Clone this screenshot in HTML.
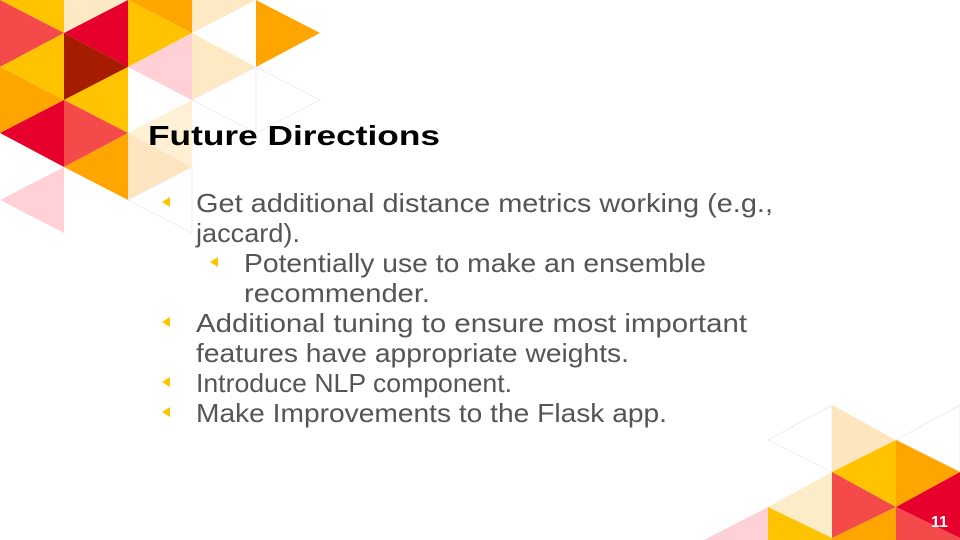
<!DOCTYPE html>
<html><head><meta charset="utf-8"><style>html,body{margin:0;padding:0;background:#fff;width:960px;height:540px;overflow:hidden}svg{display:block}</style></head>
<body>
<svg width="960" height="540" viewBox="0 0 960 540" xmlns="http://www.w3.org/2000/svg" font-family="Liberation Sans, sans-serif" overflow="hidden">
<g stroke-width="0">
<polygon points="64,-33 64,33 0,0" fill="#ffc300"/>
<polygon points="0,0 0,67 64,33" fill="#f44a4a"/>
<polygon points="64,33 64,100 0,67" fill="#ffc300"/>
<polygon points="0,67 0,133 64,100" fill="#ffa500"/>
<polygon points="64,100 64,167 0,133" fill="#e8002d"/>
<polygon points="64,167 64,233 0,200" fill="#ffd0d5"/>
<polygon points="64,-33 64,33 128,0" fill="#fde9c4"/>
<polygon points="128,0 128,67 64,33" fill="#e8002d"/>
<polygon points="64,33 64,100 128,67" fill="#a61c00"/>
<polygon points="128,67 128,133 64,100" fill="#ffc300"/>
<polygon points="64,100 64,167 128,133" fill="#f44a4a"/>
<polygon points="128,133 128,200 64,167" fill="#ffa500"/>
<polygon points="192,-33 192,33 128,0" fill="#ffa500"/>
<polygon points="128,0 128,67 192,33" fill="#ffc300"/>
<polygon points="192,33 192,100 128,67" fill="#ffd0d5"/>
<polygon points="192,100 192,167 128,133" fill="#fdf0d5"/>
<polygon points="128,133 128,200 192,167" fill="#fde5c0"/>
<polygon points="192,167 192,233 128,200" fill="#fff" stroke="#eee" stroke-width="1"/>
<polygon points="192,-33 192,33 256,0" fill="#fde9c4"/>
<polygon points="192,33 192,100 256,67" fill="#fde9c4"/>
<polygon points="256,67 256,133 192,100" fill="#fff" stroke="#eee" stroke-width="1"/>
<polygon points="256,0 256,67 320,33" fill="#ffa500"/>
<polygon points="256,67 256,133 320,100" fill="none" stroke="#eee" stroke-width="1"/>
<polygon points="832,405 832,472 768,440" fill="#fff" stroke="#eee" stroke-width="1"/>
<polygon points="832,472 832,538 768,507" fill="#fdecc8"/>
<polygon points="768,507 768,540 832,540 832,538" fill="#ffc300"/>
<polygon points="768,507 768,540 704,540" fill="#ffd0d5"/>
<polygon points="832,405 832,472 896,440" fill="#fde5c0"/>
<polygon points="896,440 896,507 832,472" fill="#ffc300"/>
<polygon points="832,472 832,538 896,507" fill="#f44a4a"/>
<polygon points="896,507 896,540 832,540 832,538" fill="#ffa500"/>
<polygon points="960,405 960,472 896,440" fill="#fff" stroke="#eee" stroke-width="1"/>
<polygon points="896,440 896,507 960,472" fill="#ffa500"/>
<polygon points="960,472 960,538 896,507" fill="#e8002d"/>
<polygon points="896,507 896,540 960,540 960,538" fill="#f44a4a"/>
</g>
<text x="148" y="145" font-size="28" font-weight="bold" fill="#000" textLength="292" lengthAdjust="spacingAndGlyphs">Future Directions</text>
<g fill="#ffc300">
<polygon points="170,197 170,207 162,202"/>
<polygon points="218,257 218,267 210,262"/>
<polygon points="170,317 170,327 162,322"/>
<polygon points="170,377 170,387 162,382"/>
<polygon points="170,407 170,417 162,412"/>
</g>
<g font-size="26" fill="#555">
<text x="196" y="212" textLength="577" lengthAdjust="spacingAndGlyphs">Get additional distance metrics working (e.g.,</text>
<text x="196" y="242" textLength="104" lengthAdjust="spacingAndGlyphs">jaccard).</text>
<text x="244" y="272" textLength="462" lengthAdjust="spacingAndGlyphs">Potentially use to make an ensemble</text>
<text x="244" y="302" textLength="186" lengthAdjust="spacingAndGlyphs">recommender.</text>
<text x="196" y="332" textLength="551" lengthAdjust="spacingAndGlyphs">Additional tuning to ensure most important</text>
<text x="196" y="362" textLength="433" lengthAdjust="spacingAndGlyphs">features have appropriate weights.</text>
<text x="196" y="392" textLength="316" lengthAdjust="spacingAndGlyphs">Introduce NLP component.</text>
<text x="196" y="422" textLength="471" lengthAdjust="spacingAndGlyphs">Make Improvements to the Flask app.</text>
</g>
<text x="931" y="527" font-size="16" font-weight="bold" fill="#fff">11</text>
</svg>
</body></html>
